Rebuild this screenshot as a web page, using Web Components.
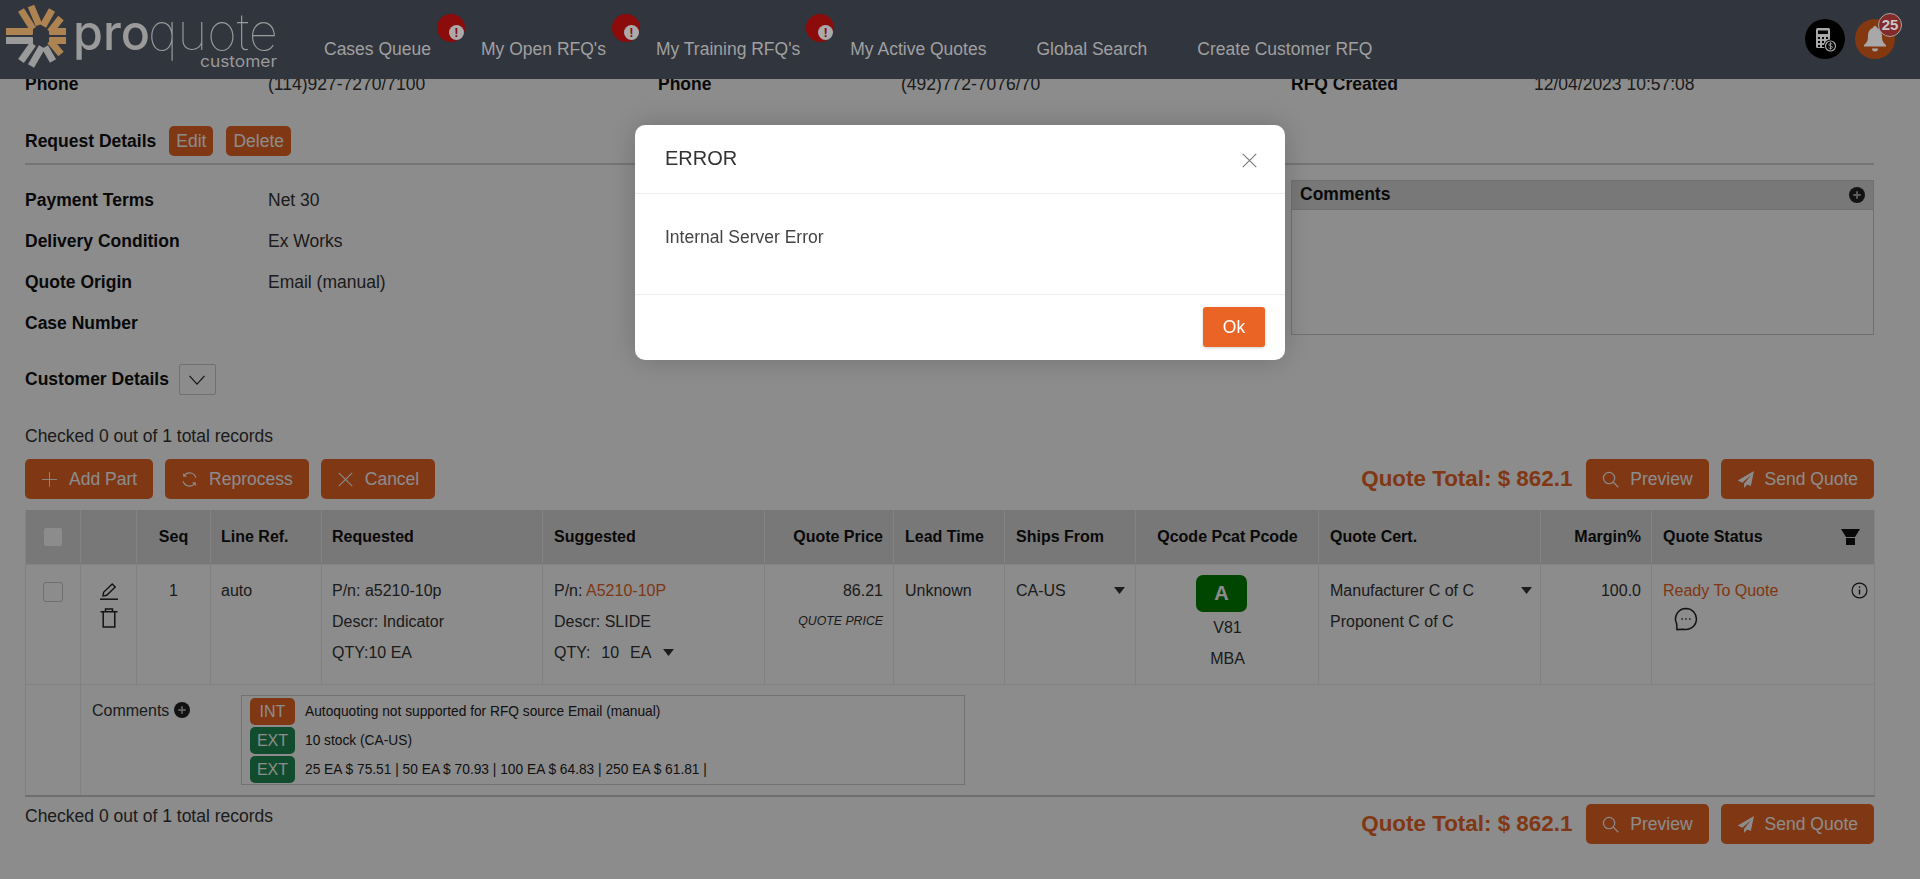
<!DOCTYPE html>
<html>
<head>
<meta charset="utf-8">
<title>Proquote</title>
<style>
    html, body {
        margin: 0;
        height: 879px;
        overflow: hidden;
        background: #fff;
        color: #333;
        font: 17.5px "Liberation Sans", Arial, sans-serif;
    }
</style>
</head>
<body>
<pq-header></pq-header>
<pq-quote-page></pq-quote-page>
<pq-modal heading="ERROR" message="Internal Server Error"></pq-modal>

<script>
const icons = {
    plus: '<path d="M12 1.5v21M1.5 12h21" stroke-width="1.3"/>',
    close: '<path d="M2.5 2.5l19 19M21.5 2.5l-19 19" stroke-width="1.5"/>',
    reload: '<path d="M21 9.5A9.5 9.5 0 0 0 4.8 5.8M3 14.5A9.5 9.5 0 0 0 19.2 18.2" stroke-width="1.6"/><path d="M2.8 3l.4 5.2 5.2-.6zM21.2 21l-.4-5.2-5.2.6z" fill="currentColor" stroke="none"/>',
    search: '<circle cx="10" cy="10" r="8" stroke-width="1.7"/><path d="M15.8 15.8L23 23" stroke-width="1.7"/>',
    send: '<path d="M24 0L1 13.5l6.5 3L20 5.5 10 18v6l4.5-5 5 2.3z" fill="currentColor" stroke="none"/>',
    filter: '<path d="M0 0h19l-5 8H5z" fill="currentColor" stroke="none"/><path d="M5 9h9v7H5z" fill="currentColor" stroke="none"/>',
    info: '<circle cx="12" cy="12" r="10.5" stroke-width="1.7"/><path d="M12 10.5v7" stroke-width="2"/><path d="M12 6.2v2" stroke-width="2"/>',
    chat: '<path d="M12 1.5a10.5 10.5 0 1 1-2.6 20.7L3 22.6l-.4-6A10.5 10.5 0 0 1 12 1.5z" stroke-width="1.5"/><path d="M7.5 12h1.4M11.3 12h1.4M15.1 12h1.4" stroke-width="1.7"/>',
    pencil: '<path d="M0 16.2h18" stroke-width="1.5"/><path d="M3 13l.6-3.7L12.2 1l3 3-8.5 8.3z" stroke-width="1.4"/>',
    trash: '<path d="M0.5 3.8h17M5.5 3.8V1h7v2.8" stroke-width="1.5"/><path d="M3.2 3.8V19h11.6V3.8" stroke-width="1.5"/>',
    chevron: '<path d="M3 7l9 10 9-10" stroke-width="1.4"/>',
    caret: '<path d="M0 0h11L5.5 7z" fill="currentColor" stroke="none"/>',
    plusdot: '<circle cx="12" cy="12" r="12" fill="#222" stroke="none"/><path d="M12 6.5v11M6.5 12h11" stroke="#aaa" stroke-width="2.8"/>'
};
const viewBoxes = { filter: '0 0 19 16', pencil: '0 0 18 17', trash: '0 0 18 20', caret: '0 0 11 7' };

class PqIcon extends HTMLElement {
    connectedCallback() {
        const name = this.getAttribute('name');
        const w = this.getAttribute('w') || 17;
        const h = this.getAttribute('h') || w;
        this.attachShadow({ mode: 'open' }).innerHTML = `
            <style>:host { display: inline-flex; flex: none; width: ${w}px; height: ${h}px; } svg { display: block; }</style>
            <svg width="${w}" height="${h}" viewBox="${viewBoxes[name] || '0 0 24 24'}" fill="none" stroke="currentColor">${icons[name]}</svg>`;
    }
}
customElements.define('pq-icon', PqIcon);

const headerTemplate = document.createElement('template');
headerTemplate.innerHTML = `
<style>
    :host {
        display: flex;
        position: relative;
        z-index: 2;
        height: 79px;
        background: #31353d;
        color: #a0a0a0;
    }
    .logo { flex: none; width: 324px; height: 79px; display: block; }
    .logo line { stroke-width: 7; }
    .tan { stroke: #ad8352; }
    .grey { stroke: #9a9a9a; }
    nav { display: flex; gap: 50px; padding-top: 39px; height: 20px; line-height: 20px; }
    .actions { margin-left: auto; display: flex; gap: 10px; padding: 19px 25px 0 0; }
    .round { position: relative; width: 40px; height: 40px; border-radius: 50%; }
    .calc { background: #000; }
    .bell { background: #84380f; }
    .count {
        position: absolute;
        top: -6px;
        right: -7px;
        width: 22px;
        height: 22px;
        border: 1px solid #a5a5a5;
        border-radius: 50%;
        background: #852a2a;
        color: #c8c8c8;
        font: bold 15px/22px "Liberation Sans", Arial, sans-serif;
        text-align: center;
    }
    svg { display: block; }
</style>
<svg class="logo" viewBox="0 0 324 79">
    <line class="tan" x1="6" y1="31.5" x2="33" y2="31.5"/>
    <line class="grey" x1="6" y1="40.5" x2="33" y2="40.5"/>
    <line class="tan" x1="49" y1="31.5" x2="66" y2="31.5"/>
    <line class="tan" x1="49" y1="40.5" x2="66" y2="40.5"/>
    <line class="tan" x1="21" y1="10" x2="33" y2="29"/>
    <line class="tan" x1="31" y1="6" x2="39" y2="25"/>
    <line class="tan" x1="52" y1="10" x2="43" y2="26"/>
    <line class="tan" x1="61" y1="18" x2="50" y2="32"/>
    <line class="grey" x1="21" y1="61" x2="33" y2="44"/>
    <line class="grey" x1="31" y1="66" x2="42" y2="47"/>
    <line class="grey" x1="53" y1="61" x2="45" y2="47"/>
    <line class="tan" x1="61" y1="54" x2="50" y2="41"/>
    <circle cx="41" cy="36" r="8.5" fill="#31353d"/>
    <text x="73" y="50" font-family="Inter, sans-serif" font-weight="500" font-size="50" fill="#9a9a9a" textLength="77" lengthAdjust="spacingAndGlyphs">pro</text>
    <text x="148" y="50" font-family="Inter, sans-serif" font-weight="100" font-size="50" fill="#9a9a9a" textLength="130" lengthAdjust="spacingAndGlyphs">quote</text>
    <text x="200" y="67" font-family="Inter, sans-serif" font-size="16" fill="#9a9a9a" textLength="77" lengthAdjust="spacingAndGlyphs">customer</text>
</svg>
<nav>
    <pq-nav-item alert>Cases Queue</pq-nav-item>
    <pq-nav-item alert>My Open RFQ's</pq-nav-item>
    <pq-nav-item alert>My Training RFQ's</pq-nav-item>
    <pq-nav-item>My Active Quotes</pq-nav-item>
    <pq-nav-item>Global Search</pq-nav-item>
    <pq-nav-item>Create Customer RFQ</pq-nav-item>
</nav>
<div class="actions">
    <div class="round calc">
        <svg width="40" height="40" viewBox="0 0 40 40">
            <rect x="11" y="9" width="14" height="20" rx="1.5" fill="#a8a8a8"/>
            <rect x="13" y="11.5" width="10" height="3.5" fill="#000"/>
            <g fill="#000"><rect x="13" y="18" width="2" height="2"/><rect x="17" y="18" width="2" height="2"/><rect x="21" y="18" width="2" height="2"/><rect x="13" y="22" width="2" height="2"/><rect x="17" y="22" width="2" height="2"/><rect x="13" y="26" width="2" height="2"/><rect x="17" y="26" width="2" height="2"/></g>
            <circle cx="25.5" cy="27" r="6.5" fill="#000"/>
            <circle cx="25.5" cy="27" r="5" fill="none" stroke="#a8a8a8" stroke-width="1.2"/>
            <path d="M27.3 25.2c-.6-.8-3.6-1-3.6.7 0 1.7 3.8.6 3.8 2.3 0 1.7-3.2 1.5-4 .5M25.5 23.2v7.6" fill="none" stroke="#a8a8a8" stroke-width=".9"/>
        </svg>
    </div>
    <div class="round bell">
        <svg width="40" height="40" viewBox="0 0 40 40">
            <path d="M20 7c1.5 0 2 1 2 2 4 1.3 5 4.5 5 8.5 0 4.5 1.5 6.5 4 8.5v1.5H9V26c2.5-2 4-4 4-8.5 0-4 1-7.2 5-8.5 0-1 .5-2 2-2z" fill="#a8a8a8"/>
            <path d="M17 29.5h6a3 3 0 0 1-6 0z" fill="#a8a8a8"/>
        </svg>
        <span class="count">25</span>
    </div>
</div>
`;
class PqHeader extends HTMLElement {
    constructor() {
        super();
        this.attachShadow({ mode: 'open' }).append(headerTemplate.content.cloneNode(true));
    }
}

const navItemTemplate = document.createElement('template');
navItemTemplate.innerHTML = `
<style>
    :host { display: block; position: relative; white-space: nowrap; }
    .alert {
        display: none;
        position: absolute;
        top: -25px;
        right: -34px;
        width: 28px;
        height: 28px;
        border-radius: 50%;
        background: #8c0b0b;
    }
    :host([alert]) .alert { display: block; }
    .alert span {
        position: absolute;
        left: 12px;
        top: 11px;
        width: 15px;
        height: 15px;
        border-radius: 50%;
        background: #aaa;
        color: #8c0b0b;
        font: bold 13px/15px "Liberation Sans", Arial, sans-serif;
        text-align: center;
    }
</style>
<slot></slot>
<div class="alert"><span>!</span></div>
`;
class PqNavItem extends HTMLElement {
    constructor() {
        super();
        this.attachShadow({ mode: 'open' }).append(navItemTemplate.content.cloneNode(true));
    }
}

const buttonTemplate = document.createElement('template');
buttonTemplate.innerHTML = `
<style>
    :host {
        display: inline-flex;
        align-items: center;
        gap: 11px;
        height: 40px;
        padding: 0 16px;
        border-radius: 5px;
        background: #e96425;
        color: #fff;
        white-space: nowrap;
    }
    :host([small]) { height: 30px; padding: 0 7px; }
</style>
<slot name="icon"></slot><slot></slot>
`;
class PqButton extends HTMLElement {
    constructor() {
        super();
        this.attachShadow({ mode: 'open' }).append(buttonTemplate.content.cloneNode(true));
    }
}

const fieldTemplate = document.createElement('template');
fieldTemplate.innerHTML = `
<style>
    :host { display: grid; grid-template-columns: 243px 1fr; height: 41px; line-height: 41px; white-space: nowrap; }
    b { color: #111; }
</style>
<b><slot name="label"></slot></b><span><slot></slot></span>
`;
class PqField extends HTMLElement {
    constructor() {
        super();
        this.attachShadow({ mode: 'open' }).append(fieldTemplate.content.cloneNode(true));
    }
}

const tagTemplate = document.createElement('template');
tagTemplate.innerHTML = `
<style>
    :host { display: flex; align-items: center; gap: 10px; height: 29px; font-size: 13.75px; color: #222; white-space: nowrap; }
    span {
        width: 45px;
        height: 27px;
        border-radius: 5px;
        background: #e96425;
        color: #fff;
        font-size: 16px;
        line-height: 27px;
        text-align: center;
    }
    :host([kind="EXT"]) span { background: #1e8b52; }
</style>
<span></span><div><slot></slot></div>
`;
class PqTag extends HTMLElement {
    constructor() {
        super();
        this.attachShadow({ mode: 'open' }).append(tagTemplate.content.cloneNode(true));
        this.shadowRoot.querySelector('span').textContent = this.getAttribute('kind');
    }
}

const tableTemplate = document.createElement('template');
tableTemplate.innerHTML = `
<style>
    :host { display: block; margin-top: 11px; font-size: 16px; }
    table { border-collapse: collapse; table-layout: fixed; width: 1849px; }
    th {
        height: 54px;
        padding: 0 10px;
        background: #dadada;
        border: 1px solid #eee;
        border-top: 0;
        color: #111;
        text-align: left;
    }
    td {
        padding: 10px 10px 0;
        border: 1px solid #ececec;
        line-height: 31px;
        vertical-align: top;
        white-space: nowrap;
    }
    tr > :nth-child(n+6) { padding-left: 11px; }
    .c { text-align: center; }
    .r { text-align: right; }
    .link { color: #e96425; }
    .line { display: flex; align-items: center; justify-content: space-between; }
    .box { display: block; box-sizing: border-box; margin: 0 auto; }
    th .box { width: 18px; height: 18px; background: #fff; border-radius: 2px; }
    td .box { width: 20px; height: 20px; margin-top: 7px; border: 1px solid #ccc; border-radius: 3px; }
    .tools { display: flex; flex-direction: column; align-items: center; gap: 8px; padding-top: 8px; color: #222; }
    .qty { display: flex; align-items: center; gap: 12px; word-spacing: 1px; }
    .price-note { font-size: 12.3px; font-style: italic; text-align: right; }
    .grade {
        width: 51px;
        height: 37px;
        margin: 0 0 0 49px;
        border-radius: 7px;
        background: #008000;
        color: #fff;
        font: bold 20px/37px "Liberation Sans", Arial, sans-serif;
    }
    .status-head { display: flex; align-items: center; justify-content: space-between; }
    .status-head pq-icon { margin-right: 4px; color: #111; }
    .note-row td { height: 110px; padding: 0; border-bottom: 2px solid #cacaca; }
    .note-row td.note { padding: 0 0 0 11px; }
    .note-wrap { display: flex; padding-top: 10px; }
    .note-label { display: flex; align-items: flex-start; gap: 5px; width: 149px; line-height: 31px; }
    .note-label pq-icon { margin-top: 7px; }
    .note-box { width: 714px; height: 87px; padding: 1px 0 0 8px; border: 1px solid #cfcfcf; }
</style>
<table>
    <colgroup>
        <col style="width:55px"><col style="width:56px"><col style="width:74px"><col style="width:111px">
        <col style="width:221px"><col style="width:222px"><col style="width:129px"><col style="width:111px">
        <col style="width:131px"><col style="width:183px"><col style="width:222px"><col style="width:111px"><col style="width:223px">
    </colgroup>
    <tr>
        <th><span class="box"></span></th>
        <th></th>
        <th class="c">Seq</th>
        <th>Line Ref.</th>
        <th>Requested</th>
        <th>Suggested</th>
        <th class="r">Quote Price</th>
        <th>Lead Time</th>
        <th>Ships From</th>
        <th class="c">Qcode Pcat Pcode</th>
        <th>Quote Cert.</th>
        <th class="r">Margin%</th>
        <th><div class="status-head">Quote Status<pq-icon name="filter" w="19" h="16"></pq-icon></div></th>
    </tr>
    <tr style="height:120px">
        <td><span class="box"></span></td>
        <td><div class="tools"><pq-icon name="pencil" w="18" h="17"></pq-icon><pq-icon name="trash" w="18" h="20"></pq-icon></div></td>
        <td class="c">1</td>
        <td>auto</td>
        <td>P/n: a5210-10p<br>Descr: Indicator<br>QTY:10 EA</td>
        <td>P/n: <span class="link">A5210-10P</span><br>Descr: SLIDE<br>
            <div class="qty"><span>QTY:&nbsp; 10&nbsp; EA</span><pq-icon name="caret" w="11" h="7"></pq-icon></div></td>
        <td class="r">86.21<div class="price-note">QUOTE PRICE</div></td>
        <td>Unknown</td>
        <td><div class="line">CA-US <pq-icon name="caret" w="11" h="7"></pq-icon></div></td>
        <td class="c"><div class="grade">A</div><div>V81</div><div>MBA</div></td>
        <td style="padding-right:8px"><div class="line">Manufacturer C of C <pq-icon name="caret" w="11" h="7"></pq-icon></div>Proponent C of C</td>
        <td class="r">100.0</td>
        <td style="padding-right:6px">
            <div class="line"><span class="link">Ready To Quote</span><pq-icon name="info" w="17" h="17" style="color:#222"></pq-icon></div>
            <pq-icon name="chat" w="24" h="24" style="margin:1px 0 0 11px;color:#222"></pq-icon>
        </td>
    </tr>
    <tr class="note-row">
        <td></td>
        <td class="note" colspan="12">
            <div class="note-wrap">
                <div class="note-label">Comments <pq-icon name="plusdot" w="16" h="16"></pq-icon></div>
                <div class="note-box">
                    <pq-tag kind="INT">Autoquoting not supported for RFQ source Email (manual)</pq-tag>
                    <pq-tag kind="EXT">10 stock (CA-US)</pq-tag>
                    <pq-tag kind="EXT">25 EA $ 75.51 | 50 EA $ 70.93 | 100 EA $ 64.83 | 250 EA $ 61.81 |</pq-tag>
                </div>
            </div>
        </td>
    </tr>
</table>
`;
class PqPartsTable extends HTMLElement {
    constructor() {
        super();
        this.attachShadow({ mode: 'open' }).append(tableTemplate.content.cloneNode(true));
    }
}

const pageTemplate = document.createElement('template');
pageTemplate.innerHTML = `
<style>
    :host { display: block; height: 800px; overflow: hidden; padding: 0 46px 0 25px; }
    .cols { display: grid; grid-template-columns: 633px 633px 583px; }
    .top { margin-top: -15px; }
    .heading { display: flex; align-items: center; gap: 13px; margin-top: 21px; height: 30px; }
    .heading b { color: #111; }
    hr { height: 2px; margin: 7px 0 15px; border: 0; background: #d5d5d5; }
    .panel { height: 155px; border: 1px solid #ccc; box-sizing: border-box; }
    .panel div {
        display: flex;
        align-items: center;
        justify-content: space-between;
        height: 27px;
        padding: 0 8px 1px 8px;
        background: #dadada;
        border-bottom: 1px solid #ccc;
        color: #111;
        font-weight: bold;
    }
    .toggle {
        display: flex;
        align-items: center;
        justify-content: center;
        box-sizing: border-box;
        width: 37px;
        height: 31px;
        margin-left: -3px;
        border: 1px solid #ccc;
        border-radius: 2px;
        color: #222;
    }
    .customer { margin-top: 20px; height: 31px; }
    .checked { line-height: 20px; color: #333; }
    .count-top { margin-top: 31px; }
    .bar { display: flex; align-items: center; gap: 12px; margin-top: 13px; }
    .total { margin-left: auto; margin-right: 2px; color: #e96425; font-size: 22.4px; font-weight: bold; }
    .bottom { display: flex; align-items: flex-start; gap: 12px; margin-top: 7px; }
    .bottom .checked { padding-top: 2px; }
    .bottom .total { line-height: 40px; }
</style>
<div class="cols top">
    <pq-field><span slot="label">Phone</span>(114)927-7270/7100</pq-field>
    <pq-field><span slot="label">Phone</span>(492)772-7076/70</pq-field>
    <pq-field><span slot="label">RFQ Created</span>12/04/2023 10:57:08</pq-field>
</div>
<div class="heading"><b>Request Details</b><pq-button small>Edit</pq-button><pq-button small>Delete</pq-button></div>
<hr>
<div class="cols">
    <div>
        <pq-field><span slot="label">Payment Terms</span>Net 30</pq-field>
        <pq-field><span slot="label">Delivery Condition</span>Ex Works</pq-field>
        <pq-field><span slot="label">Quote Origin</span>Email (manual)</pq-field>
        <pq-field><span slot="label">Case Number</span></pq-field>
    </div>
    <div></div>
    <div class="panel"><div>Comments <pq-icon name="plusdot" w="16" h="16"></pq-icon></div></div>
</div>
<div class="heading customer"><b>Customer Details</b><span class="toggle"><pq-icon name="chevron" w="20" h="20"></pq-icon></span></div>
<div class="checked count-top">Checked 0 out of 1 total records</div>
<div class="bar">
    <pq-button><pq-icon slot="icon" name="plus"></pq-icon>Add Part</pq-button>
    <pq-button><pq-icon slot="icon" name="reload"></pq-icon>Reprocess</pq-button>
    <pq-button><pq-icon slot="icon" name="close"></pq-icon>Cancel</pq-button>
    <span class="total">Quote Total: $ 862.1</span>
    <pq-button><pq-icon slot="icon" name="search"></pq-icon>Preview</pq-button>
    <pq-button><pq-icon slot="icon" name="send"></pq-icon>Send Quote</pq-button>
</div>
<pq-parts-table></pq-parts-table>
<div class="bottom">
    <div class="checked">Checked 0 out of 1 total records</div>
    <span class="total">Quote Total: $ 862.1</span>
    <pq-button><pq-icon slot="icon" name="search"></pq-icon>Preview</pq-button>
    <pq-button><pq-icon slot="icon" name="send"></pq-icon>Send Quote</pq-button>
</div>
`;
class PqQuotePage extends HTMLElement {
    constructor() {
        super();
        this.attachShadow({ mode: 'open' }).append(pageTemplate.content.cloneNode(true));
    }
}

const modalTemplate = document.createElement('template');
modalTemplate.innerHTML = `
<style>
    :host {
        position: fixed;
        inset: 0;
        z-index: 1;
        display: flex;
        justify-content: center;
        align-items: flex-start;
        padding-top: 125px;
        background: rgba(0, 0, 0, .45);
    }
    .dialog {
        width: 650px;
        height: 235px;
        display: flex;
        flex-direction: column;
        border-radius: 10px;
        background: #fff;
        box-shadow: 0 0 30px rgba(0, 0, 0, .2);
        color: #333;
    }
    header {
        display: flex;
        align-items: center;
        justify-content: space-between;
        height: 68px;
        padding: 0 27px 0 30px;
        border-bottom: 1px solid #eee;
        font-size: 20px;
    }
    .title { margin-bottom: 2px; }
    header pq-icon { color: #777; margin-top: 3px; }
    .body { height: 101px; border-bottom: 1px solid #eee; padding: 33px 30px 0; box-sizing: border-box; line-height: 20px; color: #444; }
    footer { display: flex; justify-content: flex-end; padding: 12px 20px 0 0; }
    .ok { width: 62px; height: 40px; border-radius: 3px; background: #e96425; color: #fff; line-height: 40px; text-align: center; box-shadow: 0 1px 3px rgba(0,0,0,.2); }
</style>
<div class="dialog" role="dialog">
    <header><span class="title"></span><pq-icon name="close" w="17" h="17"></pq-icon></header>
    <div class="body"></div>
    <footer><div class="ok">Ok</div></footer>
</div>
`;
class PqModal extends HTMLElement {
    constructor() {
        super();
        this.attachShadow({ mode: 'open' }).append(modalTemplate.content.cloneNode(true));
        this.shadowRoot.querySelector('.title').textContent = this.getAttribute('heading');
        this.shadowRoot.querySelector('.body').textContent = this.getAttribute('message');
    }
}

customElements.define('pq-nav-item', PqNavItem);
customElements.define('pq-header', PqHeader);
customElements.define('pq-button', PqButton);
customElements.define('pq-field', PqField);
customElements.define('pq-tag', PqTag);
customElements.define('pq-parts-table', PqPartsTable);
customElements.define('pq-quote-page', PqQuotePage);
customElements.define('pq-modal', PqModal);
</script>
</body>
</html>
